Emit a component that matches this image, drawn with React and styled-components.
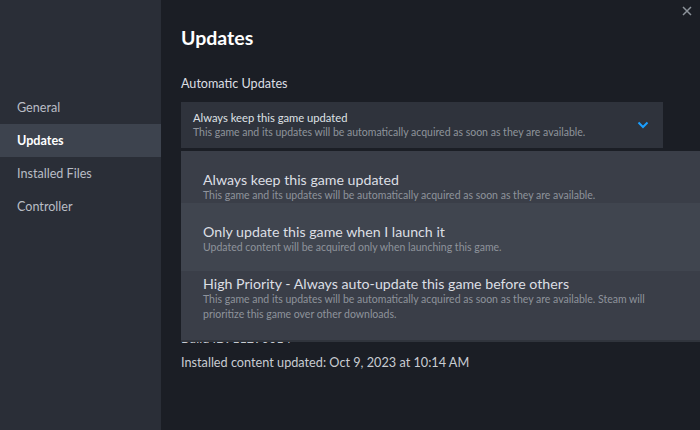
import React from "react";
import styled, { createGlobalStyle } from "styled-components";

const GlobalStyle = createGlobalStyle`
  html, body {
    margin: 0;
    padding: 0;
    background: #1b1e25;
  }
  body {
    font-family: Lato, "Noto Sans", sans-serif;
    -webkit-font-smoothing: antialiased;
  }
`;

const Window = styled.div`
  width: 700px;
  height: 430px;
  display: flex;
  overflow: hidden;
  background: #1b1e25;
`;

const Sidebar = styled.nav`
  width: 161px;
  flex-shrink: 0;
  background: #2a2e37;
  padding-top: 91px;
  box-sizing: border-box;
  display: flex;
  flex-direction: column;
`;

const NavItem = styled.div`
  height: 33px;
  display: flex;
  align-items: center;
  padding-left: 17px;
  font-size: 12.6px;
  color: ${(p) => (p.$active ? "#ffffff" : "#b9bdc5")};
  font-weight: ${(p) => (p.$active ? 700 : 400)};
  background: ${(p) => (p.$active ? "#3d434e" : "transparent")};
`;

const Main = styled.main`
  position: relative;
  flex: 1;
  padding: 24px 0 0 20px;
  display: flex;
  flex-direction: column;
`;

const CloseButton = styled.button`
  position: absolute;
  top: 4px;
  right: 6px;
  width: 14px;
  height: 14px;
  padding: 0;
  border: none;
  background: none;
  color: #8d939b;
  display: flex;
  align-items: center;
  justify-content: center;
`;

const Title = styled.h1`
  margin: 0;
  font-size: 19.5px;
  line-height: 28px;
  font-weight: 700;
  color: #ffffff;
`;

const Label = styled.div`
  margin-top: 23px;
  font-size: 12.6px;
  line-height: 18px;
  color: #dcdfe3;
`;

const Select = styled.div`
  margin-top: 9px;
  width: 482px;
  height: 46px;
  box-sizing: border-box;
  background: #2f333c;
  padding: 0 14px 0 12px;
  display: flex;
  align-items: center;
  justify-content: space-between;
`;

const OptionText = styled.div`
  display: flex;
  flex-direction: column;
`;

const SelectName = styled.div`
  font-size: 11.2px;
  line-height: 15px;
  color: #dfe2e6;
`;

const Desc = styled.div`
  font-size: 10.5px;
  line-height: 15px;
  color: #8e939b;
`;

const Info = styled.div`
  font-size: 12.7px;
  line-height: 18px;
  color: #c8ccd2;
  margin-top: ${(p) => p.$gap || 0}px;
`;

const Menu = styled.div`
  position: absolute;
  left: 20px;
  right: 0;
  top: 151px;
  height: 189px;
  background: #3a3e48;
  box-shadow: 0 2px 0 #30343c;
  display: flex;
  flex-direction: column;
`;

const MenuItem = styled.div`
  padding: ${(p) => p.$pad};
  background: ${(p) => (p.$hover ? "#40454f" : "transparent")};
`;

const MenuName = styled.div`
  font-size: 14.2px;
  line-height: 17px;
  color: #dcdfe4;
`;

const ChevronIcon = () => (
  <svg width="12" height="8" viewBox="0 0 12 8" fill="none">
    <path d="M1.5 1.5 6 6l4.5-4.5" stroke="#1a9fff" strokeWidth="2" />
  </svg>
);

const CloseIcon = () => (
  <svg width="10" height="10" viewBox="0 0 10 10">
    <path d="M1 1l8 8M9 1 1 9" stroke="currentColor" strokeWidth="1.5" />
  </svg>
);

const nav = ["General", "Updates", "Installed Files", "Controller"];

const options = [
  {
    name: "Always keep this game updated",
    desc: ["This game and its updates will be automatically acquired as soon as they are available."],
    pad: "20px 22px 0",
  },
  {
    name: "Only update this game when I launch it",
    desc: ["Updated content will be acquired only when launching this game."],
    pad: "20px 22px 16px",
    hover: true,
  },
  {
    name: "High Priority - Always auto-update this game before others",
    desc: [
      "This game and its updates will be automatically acquired as soon as they are available. Steam will",
      "prioritize this game over other downloads.",
    ],
    pad: "4px 22px 0",
  },
];

export default function App() {
  return (
    <Window>
      <GlobalStyle />
      <Sidebar>
        {nav.map((n) => (
          <NavItem key={n} $active={n === "Updates"}>
            {n}
          </NavItem>
        ))}
      </Sidebar>
      <Main>
        <CloseButton>
          <CloseIcon />
        </CloseButton>
        <Title>Updates</Title>
        <Label>Automatic Updates</Label>
        <Select>
          <OptionText>
            <SelectName>Always keep this game updated</SelectName>
            <Desc>This game and its updates will be automatically acquired as soon as they are available.</Desc>
          </OptionText>
          <ChevronIcon />
        </Select>
        <Info $gap={181}>Build ID: 11290014</Info>
        <Info $gap={6}>Installed content updated: Oct 9, 2023 at 10:14 AM</Info>
        <Menu>
          {options.map((o) => (
            <MenuItem key={o.name} $pad={o.pad} $hover={o.hover}>
              <MenuName>{o.name}</MenuName>
              {o.desc.map((d) => (
                <Desc key={d}>{d}</Desc>
              ))}
            </MenuItem>
          ))}
        </Menu>
      </Main>
    </Window>
  );
}
